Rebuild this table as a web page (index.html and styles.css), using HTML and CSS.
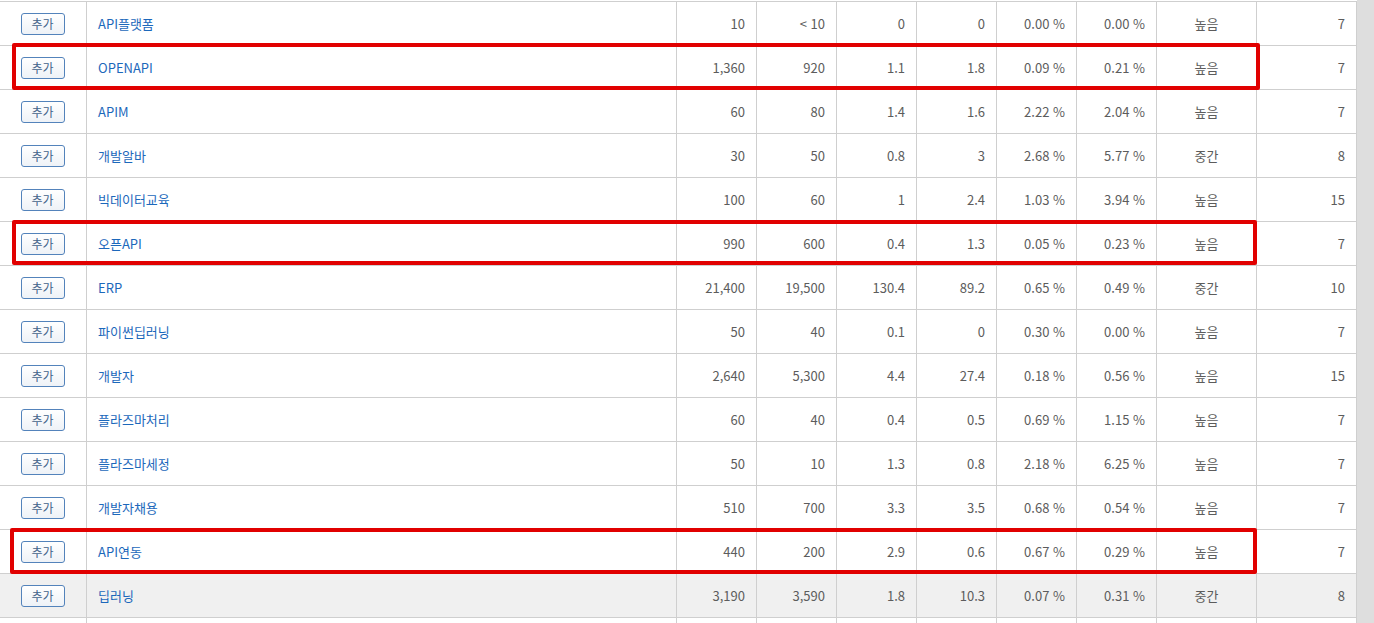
FILE: index.html
```html
<!DOCTYPE html>
<html lang="ko">
<head>
<meta charset="utf-8">
<link rel="stylesheet" href="styles.css">
</head>
<body>
<div class="page">
  <div class="table-area">
    <table class="kw-table">
      <colgroup>
        <col class="c-btn"><col class="c-kw">
        <col class="c-num"><col class="c-num"><col class="c-num"><col class="c-num"><col class="c-num"><col class="c-num">
        <col class="c-wide"><col class="c-wide">
      </colgroup>
      <tbody>
        <tr><td class="btn-cell"><button class="add">추가</button></td><td class="kw"><a>API플랫폼</a></td><td>10</td><td>&lt; 10</td><td>0</td><td>0</td><td>0.00 %</td><td>0.00 %</td><td class="mid">높음</td><td>7</td></tr>
        <tr><td class="btn-cell"><button class="add">추가</button></td><td class="kw"><a>OPENAPI</a></td><td>1,360</td><td>920</td><td>1.1</td><td>1.8</td><td>0.09 %</td><td>0.21 %</td><td class="mid">높음</td><td>7</td></tr>
        <tr><td class="btn-cell"><button class="add">추가</button></td><td class="kw"><a>APIM</a></td><td>60</td><td>80</td><td>1.4</td><td>1.6</td><td>2.22 %</td><td>2.04 %</td><td class="mid">높음</td><td>7</td></tr>
        <tr><td class="btn-cell"><button class="add">추가</button></td><td class="kw"><a>개발알바</a></td><td>30</td><td>50</td><td>0.8</td><td>3</td><td>2.68 %</td><td>5.77 %</td><td class="mid">중간</td><td>8</td></tr>
        <tr><td class="btn-cell"><button class="add">추가</button></td><td class="kw"><a>빅데이터교육</a></td><td>100</td><td>60</td><td>1</td><td>2.4</td><td>1.03 %</td><td>3.94 %</td><td class="mid">높음</td><td>15</td></tr>
        <tr><td class="btn-cell"><button class="add">추가</button></td><td class="kw"><a>오픈API</a></td><td>990</td><td>600</td><td>0.4</td><td>1.3</td><td>0.05 %</td><td>0.23 %</td><td class="mid">높음</td><td>7</td></tr>
        <tr><td class="btn-cell"><button class="add">추가</button></td><td class="kw"><a>ERP</a></td><td>21,400</td><td>19,500</td><td>130.4</td><td>89.2</td><td>0.65 %</td><td>0.49 %</td><td class="mid">중간</td><td>10</td></tr>
        <tr><td class="btn-cell"><button class="add">추가</button></td><td class="kw"><a>파이썬딥러닝</a></td><td>50</td><td>40</td><td>0.1</td><td>0</td><td>0.30 %</td><td>0.00 %</td><td class="mid">높음</td><td>7</td></tr>
        <tr><td class="btn-cell"><button class="add">추가</button></td><td class="kw"><a>개발자</a></td><td>2,640</td><td>5,300</td><td>4.4</td><td>27.4</td><td>0.18 %</td><td>0.56 %</td><td class="mid">높음</td><td>15</td></tr>
        <tr><td class="btn-cell"><button class="add">추가</button></td><td class="kw"><a>플라즈마처리</a></td><td>60</td><td>40</td><td>0.4</td><td>0.5</td><td>0.69 %</td><td>1.15 %</td><td class="mid">높음</td><td>7</td></tr>
        <tr><td class="btn-cell"><button class="add">추가</button></td><td class="kw"><a>플라즈마세정</a></td><td>50</td><td>10</td><td>1.3</td><td>0.8</td><td>2.18 %</td><td>6.25 %</td><td class="mid">높음</td><td>7</td></tr>
        <tr><td class="btn-cell"><button class="add">추가</button></td><td class="kw"><a>개발자채용</a></td><td>510</td><td>700</td><td>3.3</td><td>3.5</td><td>0.68 %</td><td>0.54 %</td><td class="mid">높음</td><td>7</td></tr>
        <tr><td class="btn-cell"><button class="add">추가</button></td><td class="kw"><a>API연동</a></td><td>440</td><td>200</td><td>2.9</td><td>0.6</td><td>0.67 %</td><td>0.29 %</td><td class="mid">높음</td><td>7</td></tr>
        <tr class="hover"><td class="btn-cell"><button class="add">추가</button></td><td class="kw"><a>딥러닝</a></td><td>3,190</td><td>3,590</td><td>1.8</td><td>10.3</td><td>0.07 %</td><td>0.31 %</td><td class="mid">중간</td><td>8</td></tr>
        <tr class="partial"><td></td><td></td><td></td><td></td><td></td><td></td><td></td><td></td><td></td><td></td></tr>
      </tbody>
    </table>
    <div class="mark mark-1"></div>
    <div class="mark mark-2"></div>
    <div class="mark mark-3"></div>
  </div>
  <div class="scrollbar"></div>
</div>
</body>
</html>
```

FILE: styles.css
```css
html, body {
  margin: 0;
  padding: 0;
  background: #ffffff;
  overflow: hidden;
}

.page {
  display: flex;
  width: 1374px;
  height: 623px;
  overflow: hidden;
}

.table-area {
  position: relative;
  width: 1357px;
  flex: none;
  padding-top: 1px;
}

.scrollbar {
  flex: 1;
  background: #dedede;
}

.kw-table {
  width: 1357px;
  table-layout: fixed;
  border-collapse: separate;
  border-spacing: 0;
  font-family: "Noto Sans CJK KR", "Noto Sans", sans-serif;
  font-size: 13px;
  color: #5c5c5c;
  border-top: 1px solid #cfcfcf;
}

.c-btn { width: 87px; }
.c-kw { width: 590px; }
.c-num { width: 80px; }
.c-wide { width: 100px; }

.kw-table td {
  height: 44px;
  padding: 0 11px 0 0;
  border-bottom: 1px solid #cfcfcf;
  border-right: 1px solid #cfcfcf;
  text-align: right;
  vertical-align: middle;
  white-space: nowrap;
  line-height: 18px;
  box-sizing: border-box;
}

.kw-table td.btn-cell {
  text-align: center;
  padding: 0;
}

.kw-table td.kw {
  text-align: left;
  padding-left: 11px;
}

.kw-table td.mid {
  text-align: center;
  padding: 0;
}

.kw a {
  color: #1c68bb;
  text-decoration: none;
}

.hover td {
  background: #f0f0f0;
}

.add {
  display: inline-block;
  width: 44px;
  height: 22px;
  margin: 0 0 0 -1px;
  padding: 0;
  font-family: "Noto Sans CJK KR", "Noto Sans", sans-serif;
  font-size: 12px;
  line-height: 20px;
  color: #43638a;
  background: linear-gradient(#ffffff, #eef2f7);
  border: 1px solid #5383bb;
  border-radius: 3px;
  vertical-align: middle;
}

.mark {
  position: absolute;
  border: 4px solid #e10000;
  border-radius: 2px;
  box-sizing: border-box;
}

.mark-1 { left: 12px; top: 43px; width: 1248px; height: 47px; }
.mark-2 { left: 12px; top: 220px; width: 1245px; height: 45px; }
.mark-3 { left: 10px; top: 528px; width: 1247px; height: 46px; }
```
